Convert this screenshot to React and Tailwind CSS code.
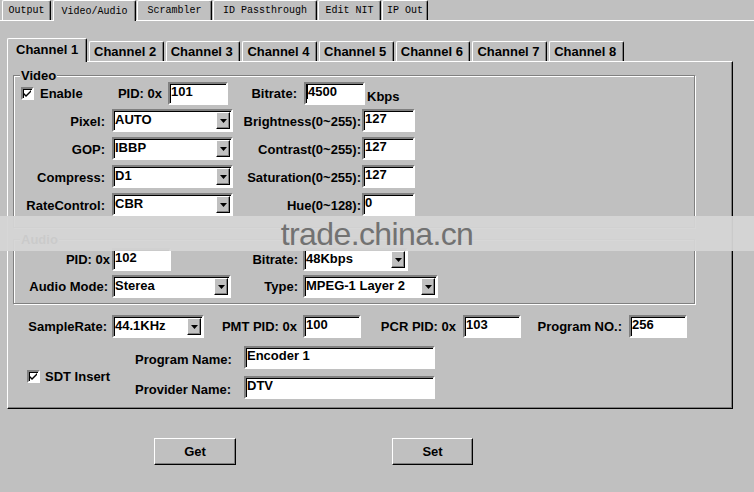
import React from "react";

const sunken =
  "bg-white border-2 border-t-[#808080] border-l-[#808080] border-r-white border-b-white shadow-[inset_1px_1px_0_#000]";
const raised =
  "bg-[#c0c0c0] border border-t-white border-l-white border-r-black border-b-black shadow-[inset_-1px_-1px_0_#808080]";
const etched =
  "relative border border-[#808080] shadow-[inset_1px_1px_0_#fff,1px_1px_0_#fff]";

const Edit = ({ value, className = "", caret = false }) => (
  <div className={`${sunken} h-[23px] shrink-0 flex pl-[1px] pt-px leading-[13px] whitespace-nowrap ${className}`}>
    {caret && <span className="w-px h-[14px] bg-black" />}
    <span>{value}</span>
  </div>
);

const Combo = ({ value, className = "" }) => (
  <div className={`${sunken} h-[23px] shrink-0 flex ${className}`}>
    <span className="flex-1 pl-[1px] pt-[2px] leading-[14px] whitespace-nowrap">{value}</span>
    <span className={`${raised} w-[14px] m-px flex items-center justify-center`}>
      <svg width="7" height="4" viewBox="0 0 7 4">
        <path d="M0 0h7L3.5 4z" fill="#000" />
      </svg>
    </span>
  </div>
);

const Check = () => (
  <span className={`${sunken} w-[13px] h-[13px] shrink-0 flex items-center justify-center`}>
    <svg width="7" height="7" viewBox="0 0 7 7">
      <path d="M0 3l2 2 5-5v2L2 7 0 5z" fill="#000" />
    </svg>
  </span>
);

const Label = ({ children, className = "" }) => (
  <span className={`shrink-0 text-right whitespace-nowrap ${className}`}>{children}</span>
);

const topTabs = [
  { name: "Output", w: "w-[49px]", ml: "ml-0" },
  { name: "Video/Audio", w: "w-[83px]", ml: "ml-[2px]", active: true },
  { name: "Scrambler", w: "w-[75px]", ml: "ml-px" },
  { name: "ID Passthrough", w: "w-[104px]", ml: "ml-px" },
  { name: "Edit NIT", w: "w-[63px]", ml: "ml-px" },
  { name: "IP Out", w: "w-[46px]", ml: "ml-px" },
];

const channels = [1, 2, 3, 4, 5, 6, 7, 8];

export default function App() {
  return (
    <div className="relative w-[754px] h-[492px] overflow-hidden bg-[#c0c0c0] font-['Liberation_Sans',Arial,sans-serif] text-[13px] font-bold leading-[15px] text-black">
      {/* outer tabs */}
      <div className="flex h-[21px] items-end border-b border-white pl-[2px]">
        {topTabs.map((t) => (
          <div
            key={t.name}
            className={`${t.w} ${t.ml} ${
              t.active ? "h-[21px] -mb-px bg-[#c0c0c0] relative z-10" : "h-[20px]"
            } flex items-center justify-center border-l border-t border-white border-r border-r-black shadow-[inset_-1px_0_0_#808080] rounded-t-[2px] font-['Liberation_Mono',monospace] font-normal text-[10px]`}
          >
            {t.name}
          </div>
        ))}
      </div>

      {/* channel tabs */}
      <div className="mt-[17px] ml-[7px] flex items-end h-[23px] gap-[2px]">
        {channels.map((c) =>
          c === 1 ? (
            <div
              key={c}
              className="w-[80px] h-[24px] -mb-px relative z-10 bg-[#c0c0c0] border-l border-t border-white border-r border-r-black shadow-[inset_-1px_0_0_#808080] rounded-t-[2px] pl-[8px] pt-[3px]"
            >
              Channel 1
            </div>
          ) : (
            <div
              key={c}
              className="w-[74.7px] h-[20px] border-l border-t border-white border-r border-r-black shadow-[inset_-1px_0_0_#808080] rounded-t-[2px] pl-[4px] pt-[2px]"
            >
              Channel {c}
            </div>
          )
        )}
      </div>

      {/* channel panel */}
      <div className="ml-[7px] w-[726px] border-t border-l border-white border-r border-b border-r-black border-b-black shadow-[inset_-1px_-1px_0_#808080] pb-[9px]">
        {/* Video group */}
        <div className={`${etched} ml-[5px] mt-[13px] w-[682px] pt-[6px] pb-[11px]`}>
          <span className="absolute -top-[8px] left-[6px] bg-[#c0c0c0] px-px">Video</span>
          <div className="flex items-center h-[23px]">
            <div className="w-[98px] flex items-center pl-[7px]">
              <Check />
              <span className="ml-[6px]">Enable</span>
            </div>
            <Label className="w-[56px] pr-[6px]">PID: 0x</Label>
            <Edit value="101" className="w-[60px]" />
            <Label className="w-[76px] pr-[7px]">Bitrate:</Label>
            <Edit value="4500" caret className="w-[61px]" />
            <span className="ml-[2px] pt-[6px]">Kbps</span>
          </div>
          {[
            ["Pixel:", "AUTO", "Brightness(0~255):", "127", "mt-[4px]"],
            ["GOP:", "IBBP", "Contrast(0~255):", "127", "mt-[5px]"],
            ["Compress:", "D1", "Saturation(0~255):", "127", "mt-[5px]"],
            ["RateControl:", "CBR", "Hue(0~128):", "0", "mt-[5px]"],
          ].map(([l, v, l2, v2, mt]) => (
            <div key={l} className={`flex items-center h-[23px] ${mt}`}>
              <Label className="w-[98px] pr-[7px] pt-px">{l}</Label>
              <Combo value={v} className="w-[121px]" />
              <Label className="w-[129px] pr-px pt-px">{l2}</Label>
              <Edit value={v2} className="w-[53px]" />
            </div>
          ))}
        </div>

        {/* Audio group */}
        <div className={`${etched} ml-[5px] mt-[11px] w-[682px] pt-[8px] pb-[5px]`}>
          <span className="absolute -top-[8px] left-[6px] bg-[#c0c0c0] px-px">Audio</span>
          <div className="flex items-center h-[23px]">
            <Label className="w-[98px] pr-[2px]">PID: 0x</Label>
            <Edit value="102" className="w-[59px]" />
            <Label className="w-[132px] pr-[5px]">Bitrate:</Label>
            <Combo value="48Kbps" className="w-[105px]" />
          </div>
          <div className="flex items-center h-[23px] mt-[4px]">
            <Label className="w-[98px] pr-[4px]">Audio Mode:</Label>
            <Combo value="Sterea" className="w-[119px]" />
            <Label className="w-[72px] pr-[5px]">Type:</Label>
            <Combo value="MPEG-1 Layer 2" className="w-[135px]" />
          </div>
        </div>

        {/* program row */}
        <div className="flex items-center h-[23px] mt-[11px]">
          <Label className="w-[104px] pr-[5px]">SampleRate:</Label>
          <Combo value="44.1KHz" className="w-[92px]" />
          <Label className="w-[99px] pr-[6px]">PMT PID: 0x</Label>
          <Edit value="100" className="w-[58px]" />
          <Label className="w-[102px] pr-[7px]">PCR PID: 0x</Label>
          <Edit value="103" className="w-[58px]" />
          <Label className="w-[108px] pr-[7px]">Program NO.:</Label>
          <Edit value="256" className="w-[58px]" />
        </div>

        {/* SDT */}
        <div className="flex mt-[8px]">
          <div className="w-[127px] flex items-center pl-[19px] pt-[8px]">
            <Check />
            <span className="ml-[5px]">SDT Insert</span>
          </div>
          <div className="flex flex-col gap-[7px]">
            <div className="flex items-center h-[23px]">
              <span className="w-[109px] pt-[4px]">Program Name:</span>
              <Edit value="Encoder 1" className="w-[191px]" />
            </div>
            <div className="flex items-center h-[23px]">
              <span className="w-[109px] pt-[4px]">Provider Name:</span>
              <Edit value="DTV" className="w-[191px]" />
            </div>
          </div>
        </div>
      </div>

      {/* buttons */}
      <div className="flex mt-[29px]">
        <button className={`${raised} ml-[154px] w-[82px] h-[27px] font-bold`}>Get</button>
        <button className={`${raised} ml-[156px] w-[81px] h-[27px] font-bold`}>Set</button>
      </div>

      {/* watermark */}
      <div className="absolute left-0 top-[216px] w-full h-[35px] bg-[#d5d5d5]/95 flex items-center justify-center text-[32px] font-normal leading-none text-[#727272] tracking-[-0.6px]">
        trade.china.cn
      </div>
    </div>
  );
}
